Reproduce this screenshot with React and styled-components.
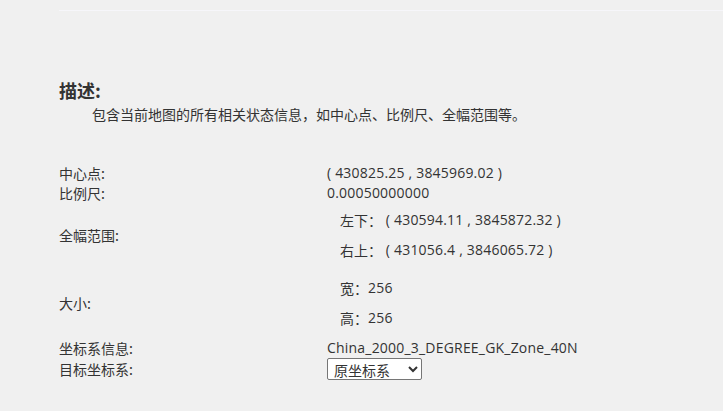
import React from "react";
import styled, { createGlobalStyle } from "styled-components";

const Global = createGlobalStyle`
  html, body { margin: 0; padding: 0; background: #f0f0f0; }
  body {
    font-family: "Open Sans", "Noto Sans CJK SC", sans-serif;
    color: #333;
  }
`;

const Page = styled.div`
  width: 723px;
  height: 411px;
  background: #f0f0f0;
  box-sizing: border-box;
  padding-top: 10px;
  overflow: hidden;
`;

const TopRule = styled.div`
  margin-left: 59px;
  height: 1px;
  background: #f6f6fa;
`;

const Content = styled.div`
  padding: 67px 0 0 59px;
`;

const Heading = styled.h3`
  margin: 0;
  font-size: 18px;
  font-weight: bold;
  line-height: 24px;
  color: #333;
  font-family: "Noto Sans CJK SC", sans-serif;
`;

const Desc = styled.p`
  margin: 2px 0 0 0;
  padding-left: 33px;
  font-size: 14px;
  line-height: 20px;
  font-family: "Noto Sans CJK SC", sans-serif;
  color: #333;
`;

const Table = styled.div`
  margin-top: 39px;
  display: grid;
  grid-template-columns: 268px auto;
  font-size: 14px;
  font-family: "Open Sans", "Noto Sans CJK SC", sans-serif;
  color: #333;
`;

const Label = styled.div`
  display: flex;
  align-items: center;
  line-height: 20px;
  font-family: "Noto Sans CJK SC", sans-serif;
  padding: ${(p) => p.$pad || "0"};
`;

const Value = styled.div`
  display: flex;
  flex-direction: column;
  justify-content: center;
  line-height: 20px;
  white-space: pre;
  letter-spacing: 0.2px;
  padding: ${(p) => p.$pad || "0"};
`;

const SubRow = styled.div`
  height: 30px;
  display: flex;
  align-items: center;
  padding-left: 13px;
  white-space: pre;
`;

const Cn = styled.span`
  font-family: "Noto Sans CJK SC", sans-serif;
  letter-spacing: 0;
`;

const Select = styled.select`
  width: 95px;
  height: 22px;
  font-size: 14px;
  font-family: "Noto Sans CJK SC", sans-serif;
  color: #333;
  background: #fff;
  border: 1px solid #767676;
  border-radius: 2px;
  padding: 0 2px;
  margin: 0;
`;

const SelectCell = styled.div`
  display: flex;
  align-items: center;
  height: 22px;
`;

export default function App() {
  return (
    <Page>
      <Global />
      <TopRule />
      <Content>
        <Heading>描述:</Heading>
        <Desc>包含当前地图的所有相关状态信息，如中心点、比例尺、全幅范围等。</Desc>
        <Table>
          <Label>中心点:</Label>
          <Value>( 430825.25 , 3845969.02 )</Value>
          <Label>比例尺:</Label>
          <Value>0.00050000000</Value>
          <Label $pad="2px 0 3px">全幅范围:</Label>
          <Value $pad="2px 0 3px">
            <SubRow><Cn>左下：</Cn> ( 430594.11 , 3845872.32 )</SubRow>
            <SubRow><Cn>右上：</Cn> ( 431056.4 , 3846065.72 )</SubRow>
          </Value>
          <Label $pad="5px 0">大小:</Label>
          <Value $pad="5px 0">
            <SubRow><Cn>宽：</Cn>256</SubRow>
            <SubRow><Cn>高：</Cn>256</SubRow>
          </Value>
          <Label>坐标系信息:</Label>
          <Value>China_2000_3_DEGREE_GK_Zone_40N</Value>
          <Label>目标坐标系:</Label>
          <SelectCell>
            <Select defaultValue="orig">
              <option value="orig">原坐标系</option>
            </Select>
          </SelectCell>
        </Table>
      </Content>
    </Page>
  );
}
